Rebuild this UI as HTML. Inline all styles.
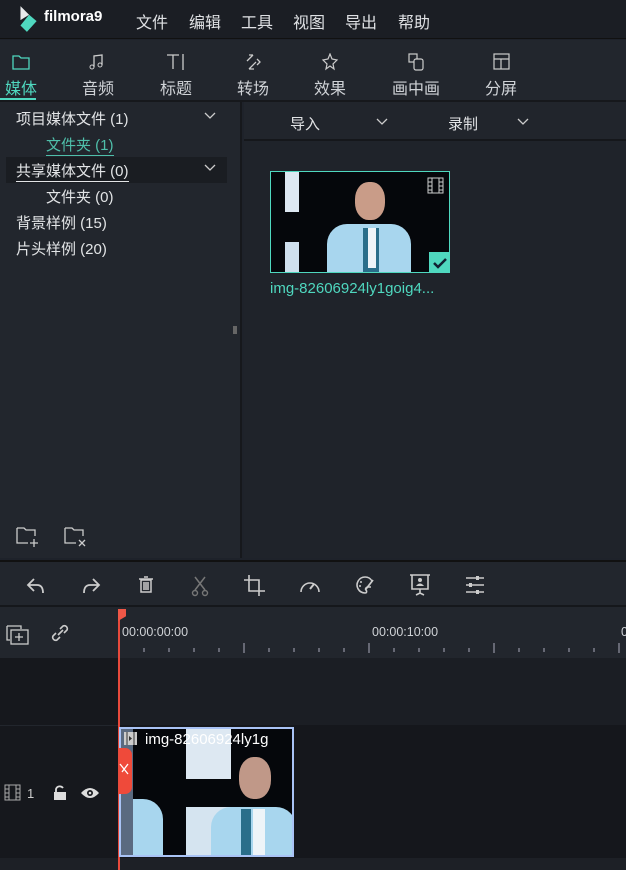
<!DOCTYPE html>
<html><head><meta charset="utf-8"><style>
*{margin:0;padding:0;box-sizing:border-box}
body{width:626px;height:870px;overflow:hidden;background:#1e222a;font-family:"Liberation Sans","Noto Sans CJK SC",sans-serif;color:#d8dadd;position:relative}
.a{position:absolute}
.menu{left:0;top:0;width:626px;height:39px;background:#1b1e24;border-bottom:1px solid #111}
.menu span{position:absolute;top:9px;font-size:16px;color:#dfe1e4}
.tabs{left:0;top:40px;width:626px;height:62px;background:#22262d;border-bottom:2px solid #16181c}
.tab{position:absolute;top:35px;font-size:16px;color:#cfd2d6;width:50px;text-align:center}
.ic{position:absolute;top:13px}
.left{left:0;top:102px;width:242px;height:456px;background:#22262d;border-right:2px solid #16181c}
.right{left:244px;top:102px;width:382px;height:456px;background:#1f232a}
.li{position:absolute;font-size:15px;color:#e2e4e6}
.tb{left:0;top:560px;width:626px;height:47px;background:#22262d;border-top:2px solid #111;border-bottom:2px solid #15171b}
</style></head><body>
<div class="a menu">
 <svg class="a" style="left:17px;top:5px" width="22" height="28" viewBox="0 0 20 26"><path d="M3 1l8 8-8 5z" fill="#e8eaec"/><path d="M11 9l7 6-9 10-6-6z" fill="#4fd8bf"/></svg>
 <span style="left:44px;top:8px;font-weight:bold;font-size:15px;color:#fff">filmora9</span>
 <span style="left:136px">文件</span><span style="left:189px">编辑</span><span style="left:241px">工具</span><span style="left:293px">视图</span><span style="left:345px">导出</span><span style="left:398px">帮助</span>
</div>
<div class="a tabs">
 <svg class="ic" style="left:11px" width="20" height="18"><path d="M2 3h6l2 2h8v11H2z" fill="none" stroke="#4fd8bf" stroke-width="1.3"/></svg>
 <div class="tab" style="left:-4px;color:#4fd8bf">媒体</div>
 <div class="a" style="left:0;top:58px;width:36px;height:2px;background:#4fd8bf"></div>
 <svg class="ic" style="left:87px" width="20" height="18"><path d="M7 14V3l8-1v10" fill="none" stroke="#ccc" stroke-width="1.3"/><circle cx="5" cy="14" r="2" fill="none" stroke="#ccc"/><circle cx="13" cy="12" r="2" fill="none" stroke="#ccc"/></svg>
 <div class="tab" style="left:73px">音频</div>
 <svg class="ic" style="left:165px" width="22" height="18"><path d="M2 2h12M8 2v14M18 1v16" fill="none" stroke="#ccc" stroke-width="1.3"/></svg>
 <div class="tab" style="left:151px">标题</div>
 <svg class="ic" style="left:243px" width="20" height="18"><path d="M4 8l6-6M10 2h-4M13 9l-7 7M6 16h5M14 6l3 3-3 3" fill="none" stroke="#ccc" stroke-width="1.3"/></svg>
 <div class="tab" style="left:228px">转场</div>
 <svg class="ic" style="left:320px" width="20" height="18"><path d="M10 1l2 5 5 1-4 4 1 5-4-3-4 3 1-5-4-4 5-1z" fill="none" stroke="#ccc" stroke-width="1.2"/></svg>
 <div class="tab" style="left:305px">效果</div>
 <svg class="ic" style="left:407px" width="20" height="18"><rect x="2" y="1" width="8" height="8" fill="none" stroke="#ccc" stroke-width="1.2"/><rect x="7" y="6" width="9" height="11" rx="2" fill="#22262d" stroke="#ccc" stroke-width="1.2"/></svg>
 <div class="tab" style="left:391px;width:50px">画中画</div>
 <svg class="ic" style="left:492px" width="20" height="18"><rect x="2" y="1" width="15" height="15" fill="none" stroke="#ccc" stroke-width="1.2"/><path d="M2 6h15M9 6v10" stroke="#ccc" stroke-width="1.2"/></svg>
 <div class="tab" style="left:476px">分屏</div>
</div>
<div class="a left">
 <div class="li" style="left:16px;top:6px">项目媒体文件 (1)</div>
 <div class="li" style="left:46px;top:32px;color:#4fbfaa;border-bottom:1px solid #4fbfaa">文件夹 (1)</div>
 <div class="a" style="left:6px;top:55px;width:221px;height:26px;background:#1a1d22"></div>
 <div class="li" style="left:16px;top:58px;border-bottom:1px solid #e2e4e6">共享媒体文件 (0)</div>
 <div class="li" style="left:46px;top:84px">文件夹 (0)</div>
 <div class="li" style="left:16px;top:110px">背景样例 (15)</div>
 <div class="li" style="left:16px;top:136px">片头样例 (20)</div>
 <svg class="a" style="left:203px;top:10px" width="14" height="8"><path d="M2 1l5 5 5-5" fill="none" stroke="#ccc" stroke-width="1.3"/></svg>
 <svg class="a" style="left:203px;top:62px" width="14" height="8"><path d="M2 1l5 5 5-5" fill="none" stroke="#ccc" stroke-width="1.3"/></svg>
 <svg class="a" style="left:15px;top:423px" width="26" height="24"><path d="M2 3h7l2 2h9v6M2 3v15h11" fill="none" stroke="#ccc" stroke-width="1.3"/><path d="M19 14v8M15 18h8" stroke="#ccc" stroke-width="1.3"/></svg>
 <svg class="a" style="left:63px;top:423px" width="26" height="24"><path d="M2 3h7l2 2h9v6M2 3v15h11" fill="none" stroke="#ccc" stroke-width="1.3"/><path d="M16 15l6 6M22 15l-6 6" stroke="#ccc" stroke-width="1.3"/></svg>
</div>
<div class="a right">
 <div class="a" style="left:0;top:0;width:382px;height:39px;border-bottom:2px solid #15171b;background:#21252c"></div>
 <div class="li" style="left:46px;top:11px">导入</div>
 <svg class="a" style="left:131px;top:16px" width="14" height="8"><path d="M2 1l5 5 5-5" fill="none" stroke="#ccc" stroke-width="1.3"/></svg>
 <div class="li" style="left:204px;top:11px">录制</div>
 <svg class="a" style="left:272px;top:16px" width="14" height="8"><path d="M2 1l5 5 5-5" fill="none" stroke="#ccc" stroke-width="1.3"/></svg>
 <div class="a" style="left:26px;top:69px;width:180px;height:102px;border:1px solid #4fd8bf;background:#05070b;overflow:hidden">
  <div class="a" style="left:14px;top:0;width:14px;height:40px;background:#dde8f2"></div>
  <div class="a" style="left:14px;top:70px;width:14px;height:32px;background:#cfe0ee"></div>
  <div class="a" style="left:84px;top:10px;width:30px;height:38px;border-radius:45%;background:#c99c88"></div>
  <div class="a" style="left:56px;top:52px;width:84px;height:50px;border-radius:20px 20px 0 0;background:#a8d6ee"></div>
  <div class="a" style="left:92px;top:56px;width:16px;height:46px;background:#2a6e8a"></div>
  <div class="a" style="left:97px;top:56px;width:8px;height:40px;background:#eef4f8"></div>
  <div class="a" style="left:158px;top:80px;width:21px;height:21px;background:#4fd8bf"></div>
  <svg class="a" style="left:160px;top:82px" width="18" height="18"><path d="M3 9l4 4 8-8" fill="none" stroke="#123" stroke-width="2.5"/></svg>
  <svg class="a" style="left:156px;top:5px" width="18" height="18"><rect x="1" y="1" width="15" height="15" fill="none" stroke="#ccc"/><path d="M5 1v15M12 1v15M1 5h4M1 9h4M1 13h4M12 5h4M12 9h4M12 13h4" stroke="#ccc"/></svg>
 </div>
 <div class="li" style="left:26px;top:178px;color:#4fd8bf;font-size:15px">img-82606924ly1goig4...</div>
</div>
<div class="a" style="left:233px;top:326px;width:4px;height:8px;background:#666"></div>
<div class="a tb">
 <svg class="a" style="left:25px;top:14px" width="22" height="20"><path d="M9 3L3 9l6 6M3 9h9q6 0 6 8" fill="none" stroke="#ccc" stroke-width="1.8"/></svg>
 <svg class="a" style="left:80px;top:14px" width="22" height="20"><path d="M13 3l6 6-6 6M19 9h-9q-6 0-6 8" fill="none" stroke="#ccc" stroke-width="1.8"/></svg>
 <svg class="a" style="left:136px;top:13px" width="20" height="20"><path d="M3 4h14M8 2h4M5 5h10v12H5zM8 7v8M10 7v8M12 7v8" fill="none" stroke="#ccc" stroke-width="1.5"/></svg>
 <svg class="a" style="left:190px;top:13px" width="20" height="22"><path d="M5 2l10 13M15 2L5 15" stroke="#777" stroke-width="1.5"/><circle cx="5" cy="18" r="2.5" fill="none" stroke="#777" stroke-width="1.4"/><circle cx="15" cy="18" r="2.5" fill="none" stroke="#777" stroke-width="1.4"/></svg>
 <svg class="a" style="left:243px;top:12px" width="24" height="24"><path d="M6 1v16h16M1 6h15v16" fill="none" stroke="#ccc" stroke-width="1.6"/></svg>
 <svg class="a" style="left:298px;top:13px" width="24" height="20"><path d="M3 17A9 9 0 1 1 21 17" fill="none" stroke="#ccc" stroke-width="1.6"/><path d="M12 14l4-5" stroke="#ccc" stroke-width="2"/></svg>
 <svg class="a" style="left:354px;top:12px" width="22" height="22"><path d="M18 7A8 8 0 1 0 11 19c2 0 2-2 1-3s0-3 2-3h3" fill="none" stroke="#ccc" stroke-width="1.6"/><path d="M19 6l-7 9" stroke="#ccc" stroke-width="1.8"/><circle cx="7" cy="8" r="1" fill="#ccc"/><circle cx="6" cy="12" r="1" fill="#ccc"/></svg>
 <svg class="a" style="left:408px;top:11px" width="24" height="24"><path d="M2 2h20M4 2v14h16V2M12 16v4M8 22l4-2 4 2" fill="none" stroke="#ccc" stroke-width="1.6"/><circle cx="12" cy="7" r="2" fill="#ccc"/><path d="M8 13q4-5 8 0" fill="#ccc"/></svg>
 <svg class="a" style="left:464px;top:12px" width="22" height="22"><path d="M2 4h18M2 11h18M2 18h18" stroke="#ccc" stroke-width="1.5"/><rect x="12" y="2" width="3" height="4" fill="#ccc"/><rect x="5" y="9" width="3" height="4" fill="#ccc"/><rect x="12" y="16" width="3" height="4" fill="#ccc"/></svg>
</div>
<div class="a" style="left:0;top:607px;width:626px;height:51px;background:#22262d"></div>
<div class="a" style="left:0;top:658px;width:118px;height:200px;background:#16181d"></div>
<div class="a" style="left:118px;top:658px;width:508px;height:67px;background:#1b1e24"></div>
<div class="a" style="left:118px;top:725px;width:508px;height:133px;background:#15171c"></div>
<div class="a" style="left:0;top:725px;width:118px;height:1px;background:#22262d"></div>
<div class="a" style="left:0;top:858px;width:626px;height:12px;background:#1d2026"></div>
<svg class="a" style="left:5px;top:624px" width="26" height="22"><path d="M2 2h14v3M2 2v14h3" fill="none" stroke="#ccc" stroke-width="1.3"/><rect x="6" y="6" width="17" height="14" fill="none" stroke="#ccc" stroke-width="1.3"/><path d="M14 9v8M10 13h8" stroke="#ccc" stroke-width="1.3"/></svg>
<svg class="a" style="left:49px;top:622px" width="22" height="22"><path d="M9 13l5-5M7 11l-3 3a3 3 0 0 0 4 4l3-3M15 11l3-3a3 3 0 0 0-4-4l-3 3" fill="none" stroke="#ccc" stroke-width="1.6"/></svg>
<div class="a" style="left:122px;top:625px;font-size:12.5px;color:#cfd2d6">00:00:00:00</div>
<div class="a" style="left:372px;top:625px;font-size:12.5px;color:#cfd2d6">00:00:10:00</div>
<div class="a" style="left:621px;top:625px;font-size:12.5px;color:#cfd2d6">0</div>
<svg class="a" style="left:118px;top:638px" width="508" height="20">
<g stroke="#aab" stroke-width="1">
<path d="M26 10v4M51 10v4M76 10v4M101 10v4M151 10v4M176 10v4M201 10v4M226 10v4M276 10v4M301 10v4M326 10v4M351 10v4M401 10v4M426 10v4M451 10v4M476 10v4"/>
<path d="M126 5v10M251 5v10M376 5v10M501 5v10"/></g></svg>
<div class="a" style="left:118px;top:609px;width:2px;height:261px;background:#e84a3c"></div>
<div class="a" style="left:118px;top:609px;width:8px;height:12px;background:#ef5747;clip-path:polygon(0 0,100% 0,100% 60%,0 100%)"></div>
<svg class="a" style="left:4px;top:784px" width="18" height="18"><rect x="1" y="1" width="15" height="15" fill="none" stroke="#aaa"/><path d="M5 1v15M12 1v15M1 5h4M1 9h4M1 13h4M12 5h4M12 9h4M12 13h4" stroke="#aaa"/></svg>
<div class="a" style="left:27px;top:786px;font-size:13px;color:#ccc">1</div>
<svg class="a" style="left:53px;top:785px" width="14" height="16"><path d="M3 7V4a4 4 0 0 1 7-1" fill="none" stroke="#ddd" stroke-width="1.8"/><rect x="1" y="7" width="12" height="8" fill="#ddd"/></svg>
<svg class="a" style="left:80px;top:786px" width="20" height="14"><path d="M1 7q9-10 18 0q-9 10-18 0z" fill="#ddd"/><circle cx="10" cy="7" r="3" fill="#16181d"/><circle cx="10" cy="7" r="1.3" fill="#ddd"/></svg>
<div class="a" style="left:119px;top:727px;width:175px;height:130px;border:2px solid #a9c3f5;background:#05070b;overflow:hidden">
 <div class="a" style="left:0;top:0;width:12px;height:128px;background:#5a6a80"></div>
 <div class="a" style="left:12px;top:70px;width:30px;height:60px;background:#a8d6ee;border-radius:0 20px 0 0"></div>
 <div class="a" style="left:65px;top:0;width:45px;height:50px;background:#dde8f2"></div>
 <div class="a" style="left:65px;top:78px;width:45px;height:50px;background:#d5e4f0"></div>
 <div class="a" style="left:118px;top:28px;width:32px;height:42px;border-radius:45%;background:#c09888"></div>
 <div class="a" style="left:90px;top:78px;width:85px;height:52px;border-radius:20px 20px 0 0;background:#a8d6ee"></div>
 <div class="a" style="left:120px;top:80px;width:10px;height:50px;background:#2a6e8a"></div>
 <div class="a" style="left:132px;top:80px;width:12px;height:50px;background:#eef4f8"></div>
 <svg class="a" style="left:2px;top:2px" width="16" height="16"><rect x="1" y="1" width="13" height="13" fill="#ccc"/><path d="M4 1v13M11 1v13" stroke="#333"/><path d="M6 5l3 2.5-3 2.5z" fill="#333"/></svg>
 <div class="a" style="left:24px;top:2px;font-size:15px;color:#fff;white-space:nowrap">img-82606924ly1g</div>
</div>
<div class="a" style="left:119px;top:748px;width:13px;height:46px;background:#ef4a3a;border-radius:0 7px 7px 0"></div>
<svg class="a" style="left:119px;top:762px" width="12" height="16"><path d="M1 2l8 10M9 2L3 10" stroke="#fff" stroke-width="1.3" fill="none"/></svg>
</body></html>
